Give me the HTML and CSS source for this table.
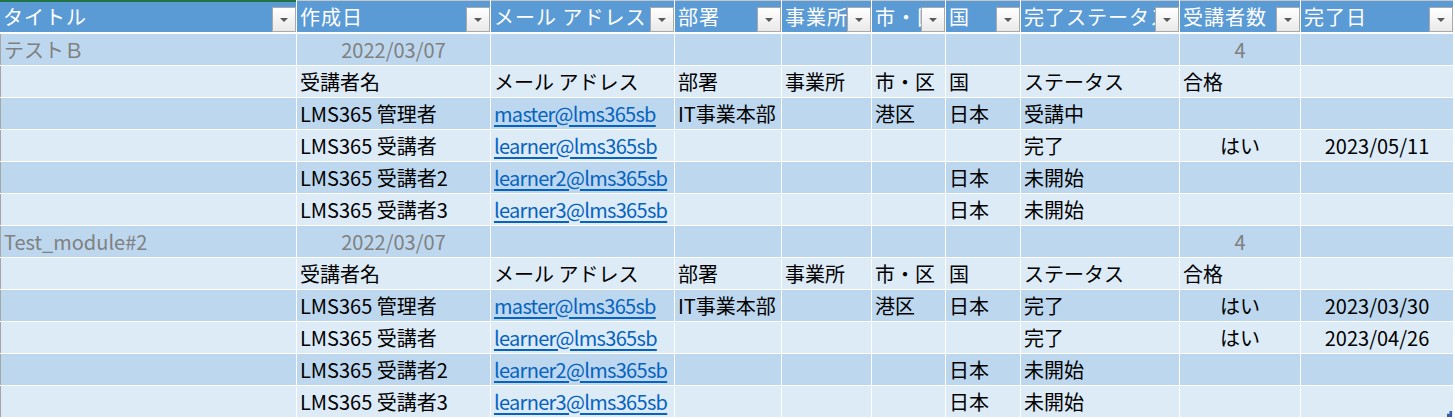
FILE: index.html
```html
<!DOCTYPE html>
<html lang="ja">
<head>
<meta charset="utf-8">
<link rel="stylesheet" href="styles.css">
</head>
<body>
<div class="sheet">
  <div class="row head">
    <div class="cell"><span class="label">タイトル</span><span class="filter"><i></i></span></div>
    <div class="cell"><span class="label">作成日</span><span class="filter"><i></i></span></div>
    <div class="cell"><span class="label">メール アドレス</span><span class="filter"><i></i></span></div>
    <div class="cell"><span class="label">部署</span><span class="filter"><i></i></span></div>
    <div class="cell"><span class="label">事業所</span><span class="filter"><i></i></span></div>
    <div class="cell"><span class="label">市・区</span><span class="filter"><i></i></span></div>
    <div class="cell"><span class="label">国</span><span class="filter"><i></i></span></div>
    <div class="cell"><span class="label">完了ステータス</span><span class="filter"><i></i></span></div>
    <div class="cell"><span class="label">受講者数</span><span class="filter"><i></i></span></div>
    <div class="cell"><span class="label">完了日</span><span class="filter"><i></i></span></div>
  </div>
  <div class="rows">
    <div class="row dark">
      <div class="cell muted">テストＢ</div><div class="cell muted center">2022/03/07</div><div class="cell"></div><div class="cell"></div><div class="cell"></div><div class="cell"></div><div class="cell"></div><div class="cell"></div><div class="cell muted center">4</div><div class="cell"></div>
    </div>
    <div class="row light">
      <div class="cell"></div><div class="cell">受講者名</div><div class="cell">メール アドレス</div><div class="cell">部署</div><div class="cell">事業所</div><div class="cell">市・区</div><div class="cell">国</div><div class="cell">ステータス</div><div class="cell">合格</div><div class="cell"></div>
    </div>
    <div class="row dark">
      <div class="cell"></div><div class="cell">LMS365 管理者</div><div class="cell"><a href="#">master@lms365sb</a></div><div class="cell">IT事業本部</div><div class="cell"></div><div class="cell">港区</div><div class="cell">日本</div><div class="cell">受講中</div><div class="cell"></div><div class="cell"></div>
    </div>
    <div class="row light">
      <div class="cell"></div><div class="cell">LMS365 受講者</div><div class="cell"><a href="#">learner@lms365sb</a></div><div class="cell"></div><div class="cell"></div><div class="cell"></div><div class="cell"></div><div class="cell">完了</div><div class="cell center">はい</div><div class="cell center">2023/05/11</div>
    </div>
    <div class="row dark">
      <div class="cell"></div><div class="cell">LMS365 受講者2</div><div class="cell"><a href="#">learner2@lms365sb</a></div><div class="cell"></div><div class="cell"></div><div class="cell"></div><div class="cell">日本</div><div class="cell">未開始</div><div class="cell"></div><div class="cell"></div>
    </div>
    <div class="row light">
      <div class="cell"></div><div class="cell">LMS365 受講者3</div><div class="cell"><a href="#">learner3@lms365sb</a></div><div class="cell"></div><div class="cell"></div><div class="cell"></div><div class="cell">日本</div><div class="cell">未開始</div><div class="cell"></div><div class="cell"></div>
    </div>
    <div class="row dark">
      <div class="cell muted">Test_module#2</div><div class="cell muted center">2022/03/07</div><div class="cell"></div><div class="cell"></div><div class="cell"></div><div class="cell"></div><div class="cell"></div><div class="cell"></div><div class="cell muted center">4</div><div class="cell"></div>
    </div>
    <div class="row light">
      <div class="cell"></div><div class="cell">受講者名</div><div class="cell">メール アドレス</div><div class="cell">部署</div><div class="cell">事業所</div><div class="cell">市・区</div><div class="cell">国</div><div class="cell">ステータス</div><div class="cell">合格</div><div class="cell"></div>
    </div>
    <div class="row dark">
      <div class="cell"></div><div class="cell">LMS365 管理者</div><div class="cell"><a href="#">master@lms365sb</a></div><div class="cell">IT事業本部</div><div class="cell"></div><div class="cell">港区</div><div class="cell">日本</div><div class="cell">完了</div><div class="cell center">はい</div><div class="cell center">2023/03/30</div>
    </div>
    <div class="row light">
      <div class="cell"></div><div class="cell">LMS365 受講者</div><div class="cell"><a href="#">learner@lms365sb</a></div><div class="cell"></div><div class="cell"></div><div class="cell"></div><div class="cell"></div><div class="cell">完了</div><div class="cell center">はい</div><div class="cell center">2023/04/26</div>
    </div>
    <div class="row dark">
      <div class="cell"></div><div class="cell">LMS365 受講者2</div><div class="cell"><a href="#">learner2@lms365sb</a></div><div class="cell"></div><div class="cell"></div><div class="cell"></div><div class="cell">日本</div><div class="cell">未開始</div><div class="cell"></div><div class="cell"></div>
    </div>
    <div class="row light">
      <div class="cell"></div><div class="cell">LMS365 受講者3</div><div class="cell"><a href="#">learner3@lms365sb</a></div><div class="cell"></div><div class="cell"></div><div class="cell"></div><div class="cell">日本</div><div class="cell">未開始</div><div class="cell"></div><div class="cell"></div>
    </div>
  </div>
  <span class="resize"></span>
</div>
</body>
</html>
```
FILE: styles.css
```css
html, body {
  margin: 0;
  background: #ffffff;
}
body {
  font-family: "Noto Sans CJK JP", "Noto Sans", sans-serif;
  font-size: 20px;
  color: #000000;
}
.sheet {
  position: relative;
  width: 1454px;
}
.row {
  display: grid;
  grid-template-columns: 296px 193px 183px 106px 89px 73px 74px 158px 120px 152px;
  column-gap: 1px;
  height: 31px;
}
.rows {
  display: flex;
  flex-direction: column;
  gap: 1px;
  margin-top: 2px;
}
.cell {
  box-sizing: border-box;
  display: flex;
  align-items: center;
  padding: 0 3px;
  white-space: nowrap;
  overflow: hidden;
  line-height: 1;
  min-width: 0;
}
.dark .cell { background: #bdd7ee; }
.light .cell { background: #ddebf7; }
.rows .cell:first-child { border-left: 1px solid #a6a6a6; }
.center { justify-content: center; }
.muted { color: #808080; }
a {
  color: #0563c1;
  text-decoration: underline;
  text-underline-offset: 3px;
  letter-spacing: -0.7px;
}

.head { height: 32px; }
.head .cell {
  background: #5b9bd5;
  color: #ffffff;
  border-top: 1px solid #c6c6c6;
  padding-right: 0;
  align-items: stretch;
}
.head .cell:first-child { border-top: 2px solid #217346; }
.label {
  flex: 1;
  min-width: 0;
  overflow: hidden;
  display: flex;
  align-items: center;
  letter-spacing: 1px;
}
.filter {
  flex: none;
  align-self: flex-end;
  box-sizing: border-box;
  width: 24px;
  height: 25px;
  border: 1px solid #a9a9a9;
  background: linear-gradient(#ffffff, #e9e9e9);
  display: flex;
  align-items: center;
  justify-content: center;
}
.filter i {
  width: 0;
  height: 0;
  border-left: 4px solid transparent;
  border-right: 4px solid transparent;
  border-top: 4px solid #5a5a5a;
}
.resize {
  position: absolute;
  left: 1447px;
  top: 411px;
  width: 5px;
  height: 6px;
  background: #3b5bab;
  clip-path: polygon(100% 0, 100% 100%, 0 100%, 0 45%, 50% 45%, 50% 0);
}
```
